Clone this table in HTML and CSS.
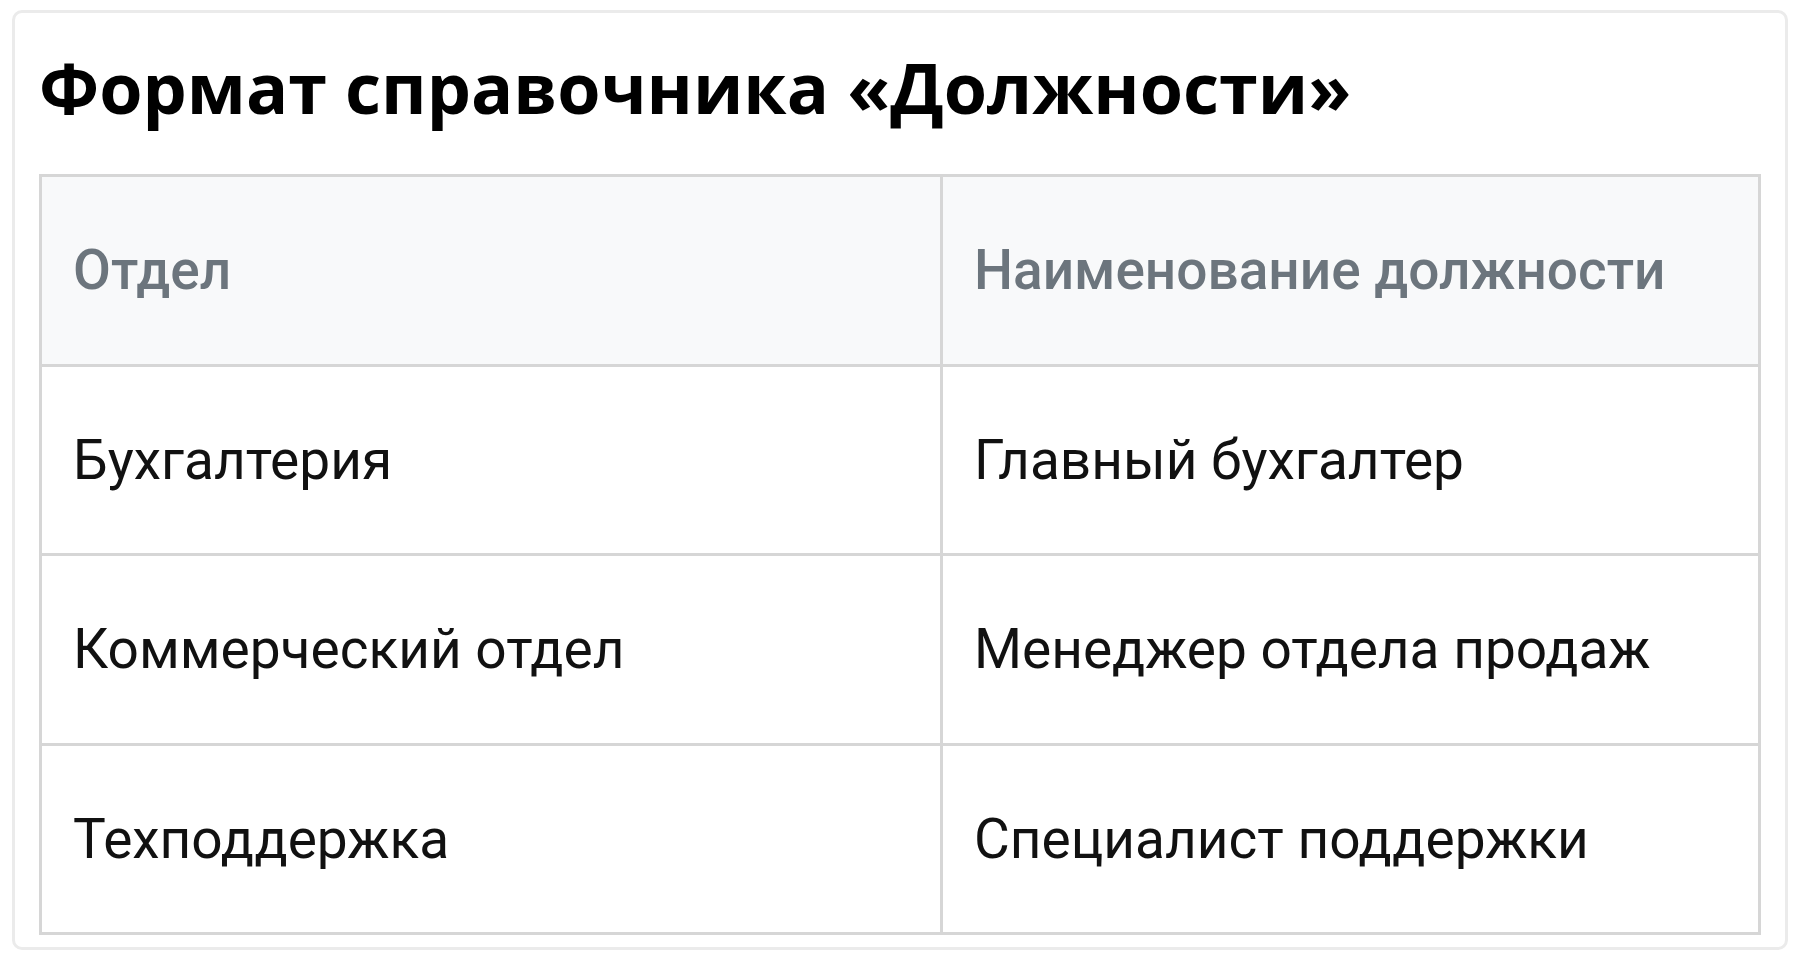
FILE: index.html
```html
<!DOCTYPE html>
<html lang="ru">
<head>
<meta charset="utf-8">
<title>Формат справочника «Должности»</title>
<link rel="stylesheet" href="styles.css">
</head>
<body>
<div class="card">
  <h1 class="title">Формат справочника «Должности»</h1>
  <table class="grid">
    <colgroup><col class="col-a"><col class="col-b"></colgroup>
    <thead>
      <tr><th>Отдел</th><th>Наименование должности</th></tr>
    </thead>
    <tbody>
      <tr><td>Бухгалтерия</td><td>Главный бухгалтер</td></tr>
      <tr><td>Коммерческий отдел</td><td>Менеджер отдела продаж</td></tr>
      <tr><td>Техподдержка</td><td>Специалист поддержки</td></tr>
    </tbody>
  </table>
</div>
</body>
</html>
```

FILE: styles.css
```css
html, body {
  margin: 0;
  padding: 0;
  background: #ffffff;
}
body {
  padding: 10px 12px;
  font-family: Roboto, "Liberation Sans", sans-serif;
}
.card {
  box-sizing: border-box;
  height: 940px;
  border: 3px solid #ebebeb;
  border-radius: 10px;
  padding: 29px 24px 12px 24px;
  background: #fff;
}
.title {
  margin: 0 0 41px 0;
  font-family: "Open Sans", "Noto Sans", sans-serif;
  font-weight: 700;
  font-size: 70px;
  line-height: 1.3;
  color: #000;
  letter-spacing: 0;
}
.grid {
  width: 100%;
  border-collapse: collapse;
  table-layout: fixed;
}
.col-a { width: 901px; }
.grid th, .grid td {
  border: 3px solid #d6d6d6;
  height: 186.5px;
  padding: 0 0 0 31px;
  text-align: left;
  vertical-align: middle;
  font-size: 55px;
  line-height: 1.2;
}
.grid th {
  background: #f8f9fa;
  color: #6c757d;
  font-weight: 500;
}
.grid td {
  color: #111;
  font-weight: 400;
}
```
